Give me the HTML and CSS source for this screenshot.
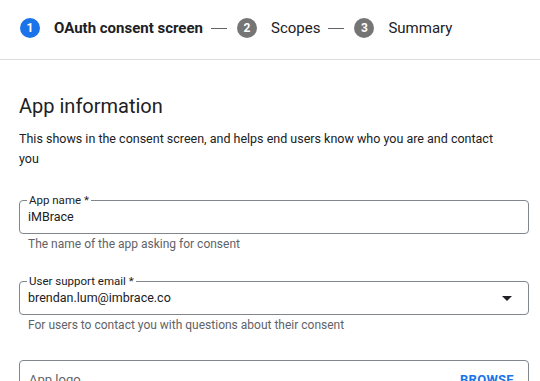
FILE: index.html
```html
<!DOCTYPE html>
<html lang="en">
<head>
    <meta charset="UTF-8">
    <meta name="viewport" content="width=device-width, initial-scale=1.0">
    <title>OAuth consent screen</title>
    <link rel="stylesheet" href="styles.css">
</head>
<body>

    <!-- Étapes -->
    <div class="stepper">
        <div class="step step-active">
            <span class="step-num">1</span>
            <span class="step-label">OAuth consent screen</span>
        </div>
        <span class="step-line"></span>
        <div class="step">
            <span class="step-num">2</span>
            <span class="step-label">Scopes</span>
        </div>
        <span class="step-line"></span>
        <div class="step">
            <span class="step-num">3</span>
            <span class="step-label">Summary</span>
        </div>
    </div>

    <div class="content">
        <h2>App information</h2>
        <p class="intro">This shows in the consent screen, and helps end users know who you are and contact you</p>

        <div class="field">
            <fieldset class="outline">
                <legend>App name *</legend>
                <div class="value">iMBrace</div>
            </fieldset>
            <div class="hint">The name of the app asking for consent</div>
        </div>

        <div class="field">
            <fieldset class="outline">
                <legend>User support email *</legend>
                <div class="value select">
                    <span>brendan.lum@imbrace.co</span>
                    <svg class="arrow" width="24" height="24" viewBox="0 0 24 24"><path d="M7 10l5 5 5-5z" fill="#202124"/></svg>
                </div>
            </fieldset>
            <div class="hint">For users to contact you with questions about their consent</div>
        </div>

        <div class="field field-logo">
            <div class="outline logo-box">
                <span class="placeholder">App logo</span>
                <span class="browse">BROWSE</span>
            </div>
        </div>
    </div>

</body>
</html>
```

FILE: styles.css
```css
/* Style général */
html, body {
    height: 100%;
    overflow: hidden;
}
body {
    font-family: 'Roboto', 'Liberation Sans', sans-serif;
    background-color: #fff;
    color: #202124;
    margin: 0;
}

/* Étapes */
.stepper {
    display: flex;
    align-items: center;
    height: 56px;
    padding: 0 0 3px 20px;
    border-bottom: 1px solid #dadce0;
    font-size: 15px;
}
.step {
    display: flex;
    align-items: center;
    gap: 14px;
}
.step-num {
    width: 20px;
    height: 20px;
    border-radius: 50%;
    background-color: #757575;
    color: #fff;
    font-size: 12px;
    font-weight: 700;
    display: flex;
    align-items: center;
    justify-content: center;
}
.step-active .step-num {
    background-color: #1a73e8;
}
.step-active .step-label {
    font-weight: 700;
}
.step-line {
    width: 16px;
    height: 1px;
    background-color: #5f6368;
    margin: 0 10px 0 8px;
}

/* Contenu */
.content {
    padding: 0 11px 0 19px;
}
h2 {
    font-size: 20px;
    font-weight: 400;
    line-height: 28px;
    margin: 32px 0 0;
}
.intro {
    max-width: 485px;
    font-size: 12.5px;
    line-height: 20px;
    margin: 9px 0 23px;
}

/* Champs */
.field {
    margin-bottom: 21px;
}
.outline {
    margin: 0;
    padding: 0 8px 7px;
    border: 1px solid #80868b;
    border-radius: 4px;
    min-width: 0;
}
legend {
    font-size: 11.5px;
    line-height: 16px;
    padding: 0 2px;
    margin-left: -1px;
    color: #202124;
}
.value {
    font-size: 12.5px;
    line-height: 18px;
    height: 18px;
}
.select {
    display: flex;
    align-items: center;
    justify-content: space-between;
}
.arrow {
    flex-shrink: 0;
    margin-right: 1px;
}
.hint {
    font-size: 12px;
    line-height: 16px;
    color: #5f6368;
    padding: 2px 0 0 9px;
}

.field-logo {
    padding-top: 6px;
}
.logo-box {
    display: flex;
    justify-content: space-between;
    align-items: flex-start;
    height: 54px;
    padding: 9px 14px 0 9px;
    font-size: 13px;
    line-height: 20px;
}
.placeholder {
    color: #5f6368;
}
.browse {
    color: #1a73e8;
    font-weight: 700;
    letter-spacing: 0.3px;
}
```
